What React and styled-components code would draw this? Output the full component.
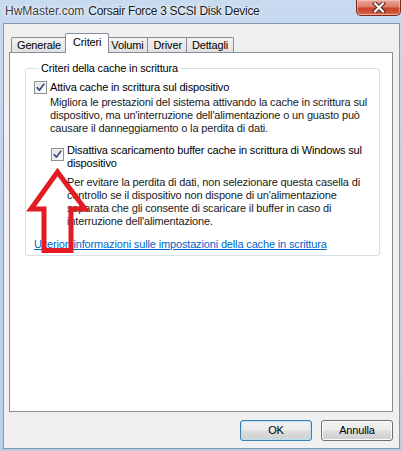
import React from 'react';
import styled, { createGlobalStyle } from 'styled-components';

const Global = createGlobalStyle`
  html, body { margin: 0; padding: 0; width: 402px; height: 451px; overflow: hidden; background: #bcd1e9; }
  #root { width: 402px; height: 451px; }
`;

const Window = styled.div`
  position: relative;
  box-sizing: border-box;
  width: 402px;
  height: 451px;
  display: flex;
  flex-direction: column;
  padding: 0 2px 2px 3px;
  background: linear-gradient(180deg, #c7daef 0%, #bed3eb 40%, #b9cfe8 100%);
  font-family: "Liberation Sans", Arial, sans-serif;
  font-size: 11px;
  letter-spacing: -0.15px;
  color: #000;
`;

const TitleBar = styled.div`
  height: 23px;
  display: flex;
  align-items: flex-start;
`;

const TitleText = styled.div`
  margin-left: 2px;
  height: 23px;
  line-height: 23px;
  font-size: 12px;
  letter-spacing: -0.3px;
  color: #1b1b1b;
  text-shadow: 0 0 6px rgba(255, 255, 255, 0.95), 0 0 2px rgba(255, 255, 255, 0.9);
  white-space: nowrap;
`;

const Watermark = styled.span`
  letter-spacing: 0;
  color: #3d3d3d;
  margin-right: 4px;
`;

const CloseButton = styled.div`
  margin-left: auto;
  margin-right: -1px;
  width: 45px;
  height: 16px;
  box-sizing: border-box;
  border: 1px solid #7b2a1f;
  border-top: none;
  border-radius: 0 0 5px 5px;
  background: linear-gradient(180deg, #e9a99b 0%, #dc7b66 45%, #c8432b 55%, #d0553a 85%, #e58a6d 100%);
  box-shadow: inset 0 0 0 1px rgba(255, 220, 210, 0.45);
  display: flex;
  align-items: center;
  justify-content: center;
`;

const Client = styled.div`
  flex: 1;
  display: flex;
  flex-direction: column;
  box-sizing: border-box;
  background: #f0f0f0;
  border: 1px solid #8497b0;
  padding: 9px 6px 7px 5px;
`;

const TabRow = styled.div`
  height: 19px;
  display: flex;
  align-items: flex-start;
  padding-left: 2px;
`;

const Tab = styled.div`
  position: relative;
  z-index: ${p => (p.$active ? 2 : 1)};
  box-sizing: border-box;
  height: ${p => (p.$active ? 20 : 15)}px;
  margin: ${p => (p.$active ? '0 -2px 0 -2px' : '4px 0 0 0')};
  padding: 0 ${p => (p.$active ? 7 : 5)}px;
  border: 1px solid #898c95;
  border-bottom: none;
  border-radius: 2px 2px 0 0;
  background: ${p => (p.$active ? '#ffffff' : 'linear-gradient(180deg, #f3f3f3 0%, #ebebeb 50%, #e1e1e1 100%)')};
  line-height: ${p => (p.$active ? 16 : 14)}px;
  white-space: nowrap;
  & + & { margin-left: ${p => (p.$active ? -2 : -1)}px; }
`;

const Panel = styled.div`
  position: relative;
  z-index: 1;
  box-sizing: border-box;
  height: 360px;
  border: 1px solid #898c95;
  background: #fff;
  padding: 9px 12px 0 15px;
`;

const Group = styled.fieldset`
  margin: 0;
  min-inline-size: 0;
  box-sizing: border-box;
  border: 1px solid #d5dfe5;
  border-radius: 3px;
  padding: 6px 8px 4px 8px;
  display: flex;
  flex-direction: column;
  align-items: flex-start;
`;

const Legend = styled.legend`
  margin-left: 5px;
  padding: 0 2px;
  line-height: 13px;
  color: #000;
`;

const CheckRow = styled.div`
  display: flex;
  align-items: flex-start;
  gap: 3px;
  margin-left: ${p => p.$indent || 0}px;
  margin-top: ${p => p.$top || 0}px;
`;

const Box = styled.div`
  flex: none;
  box-sizing: border-box;
  width: 13px;
  height: 13px;
  margin-top: ${p => p.$drop || 0}px;
  border: 1px solid #8e8f8f;
  background: linear-gradient(135deg, #dcdcdc 0%, #f4f4f4 60%, #ffffff 100%);
  box-shadow: inset 0 0 0 1px #f4f4f4;
  display: flex;
  align-items: center;
  justify-content: center;
`;

const Lines = styled.div`
  line-height: 13px;
  white-space: nowrap;
  color: ${p => p.$muted ? '#1a1a1a' : '#000'};
  margin-left: ${p => p.$indent || 0}px;
  margin-top: ${p => p.$top || 0}px;
`;

const Link = styled.a`
  margin-top: 10px;
  line-height: 13px;
  color: #0066cc;
  text-decoration: underline;
  white-space: nowrap;
  cursor: pointer;
`;

const ButtonRow = styled.div`
  margin-top: 8px;
  display: flex;
  justify-content: flex-end;
  gap: 9px;
`;

const Button = styled.div`
  box-sizing: border-box;
  width: 72px;
  height: 21px;
  border: 1px solid ${p => (p.$default ? '#3c7fb1' : '#707070')};
  border-radius: 3px;
  background: linear-gradient(180deg, #f2f2f2 0%, #ebebeb 48%, #dddddd 52%, #cfcfcf 100%);
  box-shadow: inset 0 0 0 1px ${p => (p.$default ? '#b6e3f7' : '#fbfbfb')};
  display: flex;
  align-items: center;
  justify-content: center;
  line-height: 13px;
`;

const ArrowMark = styled.svg`
  position: absolute;
  z-index: 10;
  left: 26px;
  top: 164px;
  pointer-events: none;
`;

function Check() {
  return (
    <svg width="9" height="9" viewBox="0 0 9 9">
      <path d="M1.2 4.6 L3.4 7.2 L7.8 1.2" fill="none" stroke="#3b4f86" strokeWidth="1.7" strokeLinejoin="round" strokeLinecap="round" />
    </svg>
  );
}

export default function App() {
  return (
    <>
      <Global />
      <Window>
        <TitleBar>
          <TitleText>
            <Watermark>HwMaster.com</Watermark>Corsair Force 3 SCSI Disk Device
          </TitleText>
          <CloseButton>
            <svg width="14" height="11" viewBox="0 0 14 11">
              <path d="M3 1.5 L11 9.5 M11 1.5 L3 9.5" stroke="#4a1a12" strokeWidth="4" strokeLinecap="square" />
              <path d="M3 1.5 L11 9.5 M11 1.5 L3 9.5" stroke="#ffffff" strokeWidth="2.2" strokeLinecap="square" />
            </svg>
          </CloseButton>
        </TitleBar>
        <Client>
          <TabRow>
            <Tab>Generale</Tab>
            <Tab $active>Criteri</Tab>
            <Tab>Volumi</Tab>
            <Tab>Driver</Tab>
            <Tab>Dettagli</Tab>
          </TabRow>
          <Panel>
            <Group>
              <Legend>Criteri della cache in scrittura</Legend>
              <CheckRow>
                <Box><Check /></Box>
                <Lines>Attiva cache in scrittura sul dispositivo</Lines>
              </CheckRow>
              <Lines $indent={16} $top={2} $muted>
                Migliora le prestazioni del sistema attivando la cache in scrittura sul<br />
                dispositivo, ma un'interruzione dell'alimentazione o un guasto può<br />
                causare il danneggiamento o la perdita di dati.
              </Lines>
              <CheckRow $indent={17} $top={9}>
                <Box $drop={4}><Check /></Box>
                <Lines>
                  Disattiva scaricamento buffer cache in scrittura di Windows sul<br />
                  dispositivo
                </Lines>
              </CheckRow>
              <Lines $indent={33} $top={6} $muted>
                Per evitare la perdita di dati, non selezionare questa casella di<br />
                controllo se il dispositivo non dispone di un'alimentazione<br />
                separata che gli consente di scaricare il buffer in caso di<br />
                interruzione dell'alimentazione.
              </Lines>
              <Link>Ulteriori informazioni sulle impostazioni della cache in scrittura</Link>
            </Group>
          </Panel>
          <ButtonRow>
            <Button $default>OK</Button>
            <Button>Annulla</Button>
          </ButtonRow>
        </Client>
        <ArrowMark width="64" height="92" viewBox="0 0 64 92">
          <polygon
            points="31.5,8 5,45 18,45 18,86.5 45,86.5 45,45 59,45"
            fill="none"
            stroke="#e31b23"
            strokeWidth="5"
            strokeLinejoin="miter"
          />
        </ArrowMark>
      </Window>
    </>
  );
}
